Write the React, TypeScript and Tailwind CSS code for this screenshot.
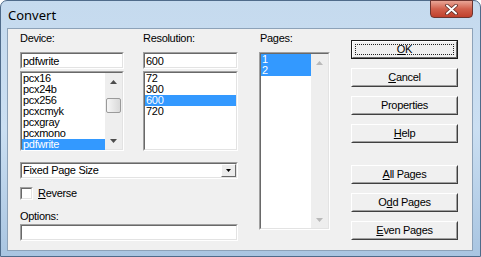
import type { ReactNode } from "react";

// Convert dialog, Vista frame with classic controls

const devices = ["pcx16", "pcx24b", "pcx256", "pcxcmyk", "pcxgray", "pcxmono", "pdfwrite"];
const resolutions = ["72", "300", "600", "720"];
const pages = ["1", "2"];

function Sunken({ className = "", children }: { className?: string; children?: ReactNode }) {
  return (
    <div className={`border border-t-[#a0a0a0] border-l-[#a0a0a0] border-b-white border-r-white ${className}`}>
      <div className="h-full border border-t-[#696969] border-l-[#696969] border-b-[#e3e3e3] border-r-[#e3e3e3] bg-white">
        {children}
      </div>
    </div>
  );
}

function Arrow({ up, color }: { up?: boolean; color: string }) {
  return (
    <svg width="7" height="4" viewBox="0 0 7 4">
      <path d={up ? "M0 4 L3.5 0 L7 4Z" : "M0 0 L3.5 4 L7 0Z"} fill={color} />
    </svg>
  );
}

function VScroll({ thumb, disabled }: { thumb?: boolean; disabled?: boolean }) {
  const c = disabled ? "#b9b9b9" : "#4d4d4d";
  return (
    <div className="flex h-full w-[17px] flex-col bg-[#eeeeee]">
      <div className="flex h-[17px] items-center justify-center">
        <Arrow up color={c} />
      </div>
      <div className="flex-1">
        {thumb && (
          <div className="mx-auto mt-[8px] h-[15px] w-[15px] rounded-[2px] border border-[#9a9a9a] bg-linear-to-r from-[#f6f6f6] to-[#d9d9d9]" />
        )}
      </div>
      <div className="flex h-[17px] items-center justify-center">
        <Arrow color={c} />
      </div>
    </div>
  );
}

function ListRow({ text, selected }: { text: string; selected?: boolean }) {
  return (
    <div className={`h-[11px] px-[1px] leading-[11px] ${selected ? "bg-[#3399ff] text-white" : ""}`}>{text}</div>
  );
}

function Btn({ children, isDefault, className = "" }: { children: ReactNode; isDefault?: boolean; className?: string }) {
  if (isDefault) {
    return (
      <div className={`h-[19px] border border-[#1a1a1a] ${className}`}>
        <div className="h-full border border-t-white border-l-white border-b-[#6b6b6b] border-r-[#6b6b6b] bg-[#f0f0f0] p-[2px]">
          <div className="flex h-full items-center justify-center border border-dotted border-[#222]">{children}</div>
        </div>
      </div>
    );
  }
  return (
    <div className={`h-[19px] border border-t-white border-l-white border-b-[#404040] border-r-[#404040] ${className}`}>
      <div className="flex h-full items-center justify-center border border-t-[#f0f0f0] border-l-[#f0f0f0] border-b-[#a0a0a0] border-r-[#a0a0a0] bg-[#f0f0f0]">
        {children}
      </div>
    </div>
  );
}

function Label({ children, className = "" }: { children: ReactNode; className?: string }) {
  return <div className={`h-[13px] leading-[13px] ${className}`}>{children}</div>;
}

export default function App() {
  return (
    <div className="h-[257px] w-[481px] overflow-hidden bg-white">
      <div className="flex h-full flex-col rounded-t-[7px] border border-[#4f6b8a] bg-linear-to-b from-[#c5daee] via-[#cbdff2] to-[#a9c5e1] pb-[5px] pl-[6px] pr-[7px]">
        {/* title bar */}
        <div className="flex h-[27px] items-start">
          <div className="self-center pl-[1px] font-['Noto_Sans',sans-serif] text-[13px] leading-[16px] text-black">Convert</div>
          <div className="-mt-[1px] ml-auto flex h-[18px] w-[43px] items-center justify-center rounded-b-[4px] border border-[#6d3530] bg-linear-to-b from-[#e8a596] via-[#d1604c] to-[#c0402c]">
            <svg width="13" height="11" viewBox="0 0 13 11">
              <path d="M2 1.5 L11 9.5 M11 1.5 L2 9.5" stroke="#5a2a25" strokeWidth="3.6" strokeLinecap="round" />
              <path d="M2 1.5 L11 9.5 M11 1.5 L2 9.5" stroke="#ffffff" strokeWidth="2" strokeLinecap="round" />
            </svg>
          </div>
        </div>

        {/* client area */}
        <div className="flex flex-1 border border-[#8da2b8] bg-[#f0f0f0] pl-[12px] pt-[3px] font-['Liberation_Sans',Arial,sans-serif] text-[11px] tracking-[-0.3px] text-black">
          {/* left part */}
          <div className="flex w-[218px] flex-col">
            <div className="flex">
              <div className="flex w-[104px] flex-col">
                <Label>Device:</Label>
                <Sunken className="mt-[7px] h-[17px]">
                  <div className="pl-[1px] leading-[15px]">pdfwrite</div>
                </Sunken>
                <Sunken className="mt-[2px] h-[80px]">
                  <div className="flex h-full">
                    <div className="flex-1">
                      {devices.map((d) => (
                        <ListRow key={d} text={d} selected={d === "pdfwrite"} />
                      ))}
                    </div>
                    <VScroll thumb />
                  </div>
                </Sunken>
              </div>
              <div className="ml-[19px] flex w-[95px] flex-col">
                <Label>Resolution:</Label>
                <Sunken className="mt-[7px] h-[17px]">
                  <div className="pl-[1px] leading-[15px]">600</div>
                </Sunken>
                <Sunken className="mt-[2px] h-[80px]">
                  {resolutions.map((r) => (
                    <ListRow key={r} text={r} selected={r === "600"} />
                  ))}
                </Sunken>
              </div>
            </div>

            <Sunken className="mt-[11px] h-[17px]">
              <div className="flex h-full items-center">
                <div className="flex-1 pl-[1px]">Fixed Page Size</div>
                <div className="flex h-[13px] w-[15px] items-center justify-center border border-t-white border-l-white border-b-[#6b6b6b] border-r-[#6b6b6b] bg-[#ececec]">
                  <svg width="5" height="3" viewBox="0 0 5 3">
                    <path d="M0 0 L2.5 3 L5 0Z" fill="#000" />
                  </svg>
                </div>
              </div>
            </Sunken>

            <div className="mt-[8px] flex h-[13px] items-center">
              <Sunken className="h-[13px] w-[13px]" />
              <span className="ml-[5px]">
                <span className="underline">R</span>everse
              </span>
            </div>

            <Label className="mt-[10px]">Options:</Label>
            <Sunken className="mt-[1px] h-[17px]" />
          </div>

          {/* pages */}
          <div className="ml-[21px] flex w-[71px] flex-col">
            <Label className="pl-[1px]">Pages:</Label>
            <Sunken className="mt-[7px] h-[178px]">
              <div className="flex h-full">
                <div className="flex-1">
                  {pages.map((p) => (
                    <ListRow key={p} text={p} selected />
                  ))}
                </div>
                <VScroll disabled />
              </div>
            </Sunken>
          </div>

          {/* buttons */}
          <div className="ml-[21px] mt-[8px] flex w-[107px] flex-col">
            <Btn isDefault>
              <span className="underline">O</span>K
            </Btn>
            <Btn className="mt-[9px]">
              <span className="underline">C</span>ancel
            </Btn>
            <Btn className="mt-[9px]">Properties</Btn>
            <Btn className="mt-[9px]">
              <span className="underline">H</span>elp
            </Btn>
            <Btn className="mt-[22px]">
              <span className="underline">A</span>ll Pages
            </Btn>
            <Btn className="mt-[9px]">
              O<span className="underline">d</span>d Pages
            </Btn>
            <Btn className="mt-[9px]">
              <span className="underline">E</span>ven Pages
            </Btn>
          </div>
        </div>
      </div>
    </div>
  );
}
